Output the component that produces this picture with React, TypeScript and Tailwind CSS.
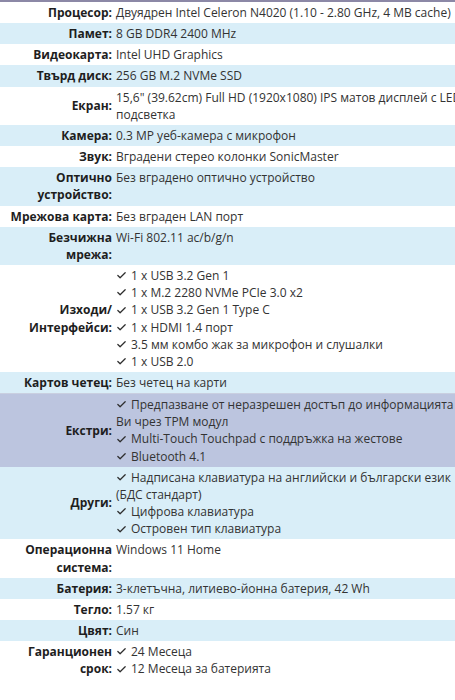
import { Check } from 'lucide-react';

type Spec = {
  label: string;
  value?: string;
  items?: string[];
  tone: 'white' | 'blue' | 'violet';
};

const specs: Spec[] = [
  { label: 'Процесор:', value: 'Двуядрен Intel Celeron N4020 (1.10 - 2.80 GHz, 4 MB cache)', tone: 'white' },
  { label: 'Памет:', value: '8 GB DDR4 2400 MHz', tone: 'blue' },
  { label: 'Видеокарта:', value: 'Intel UHD Graphics', tone: 'white' },
  { label: 'Твърд диск:', value: '256 GB M.2 NVMe SSD', tone: 'blue' },
  { label: 'Екран:', value: '15,6" (39.62cm) Full HD (1920x1080) IPS матов дисплей с LED подсветка', tone: 'white' },
  { label: 'Камера:', value: '0.3 MP уеб-камера с микрофон', tone: 'blue' },
  { label: 'Звук:', value: 'Вградени стерео колонки SonicMaster', tone: 'white' },
  { label: 'Оптично устройство:', value: 'Без вградено оптично устройство', tone: 'blue' },
  { label: 'Мрежова карта:', value: 'Без вграден LAN порт', tone: 'white' },
  { label: 'Безчижна мрежа:', value: 'Wi-Fi 802.11 ac/b/g/n', tone: 'blue' },
  {
    label: 'Изходи/ Интерфейси:',
    items: [
      '1 x USB 3.2 Gen 1',
      '1 x M.2 2280 NVMe PCIe 3.0 x2',
      '1 x USB 3.2 Gen 1 Type C',
      '1 x HDMI 1.4 порт',
      '3.5 мм комбо жак за микрофон и слушалки',
      '1 x USB 2.0',
    ],
    tone: 'white',
  },
  { label: 'Картов четец:', value: 'Без четец на карти', tone: 'blue' },
  {
    label: 'Екстри:',
    items: [
      'Предпазване от неразрешен достъп до информацията Ви чрез TPM модул',
      'Multi-Touch Touchpad с поддръжка на жестове',
      'Bluetooth 4.1',
    ],
    tone: 'violet',
  },
  {
    label: 'Други:',
    items: [
      'Надписана клавиатура на английски и български език (БДС стандарт)',
      'Цифрова клавиатура',
      'Островен тип клавиатура',
    ],
    tone: 'blue',
  },
  { label: 'Операционна система:', value: 'Windows 11 Home', tone: 'white' },
  { label: 'Батерия:', value: '3-клетъчна, литиево-йонна батерия, 42 Wh', tone: 'blue' },
  { label: 'Тегло:', value: '1.57 кг', tone: 'white' },
  { label: 'Цвят:', value: 'Син', tone: 'blue' },
  { label: 'Гаранционен срок:', items: ['24 Месеца', '12 Месеца за батерията'], tone: 'white' },
];

const toneClass = {
  white: 'bg-white',
  blue: 'bg-[#d9eef8]',
  violet: 'bg-[#bcc5df] border-t border-[#c9cfe0]',
};

function CheckItem({ text }: { text: string }) {
  return (
    <div>
      <Check className="mr-[4px] inline-block h-[11px] w-[11px] -translate-y-[1px] text-[#2e2e2e]" strokeWidth={2.7} />
      {text}
    </div>
  );
}

export default function App() {
  return (
    <div className="h-[700px] w-[455px] overflow-hidden bg-white font-['Open_Sans',sans-serif] text-[12px] leading-[17.15px]">
      <div className="h-[2px] bg-[#8c88a6]" />
      <div className="w-[470px]">
        {specs.map((spec) => (
          <div key={spec.label} className={`flex items-stretch py-[2px] ${toneClass[spec.tone]}`}>
            <div className="flex w-[116px] shrink-0 items-center justify-end pr-[4px] text-right font-bold text-[#1e1e1e]">
              {spec.label}
            </div>
            <div className="w-[348px] shrink-0 text-[#333]">
              {spec.value}
              {spec.items?.map((item) => <CheckItem key={item} text={item} />)}
            </div>
          </div>
        ))}
      </div>
    </div>
  );
}
